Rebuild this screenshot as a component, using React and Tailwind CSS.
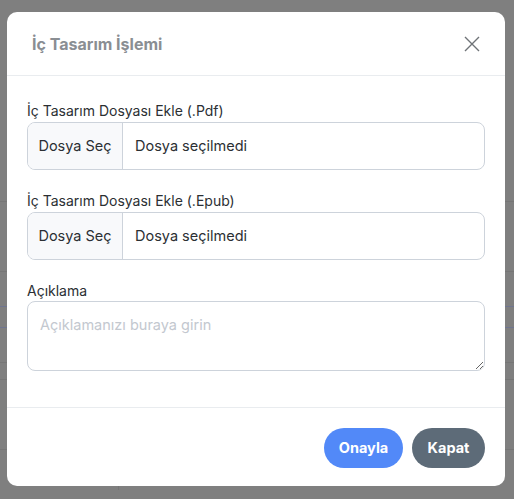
import { useState } from 'react';

const FileField = ({ label }) => (
  <div>
    <div className="text-[14px] leading-[20px] text-[#2b2f33] mb-px">{label}</div>
    <div className="flex h-[48px] rounded-[8px] border border-[#cdd3db] overflow-hidden text-[14.5px] text-[#2b2f33]">
      <div className="w-[95px] shrink-0 flex items-center justify-center bg-[#f8f9fb] border-r border-[#cdd3db]">
        Dosya Seç
      </div>
      <div className="flex items-center pl-[12px]">Dosya seçilmedi</div>
    </div>
  </div>
);

export default function App() {
  const [note, setNote] = useState('');

  return (
    <div
      className="relative w-[514px] h-[499px] overflow-hidden bg-[#7f7f7f]"
      style={{ fontFamily: 'Inter, "Noto Sans", sans-serif' }}
    >
      {/* dimmed page behind the modal */}
      <div className="flex flex-col">
        <div className="h-[202px] border-b border-[#767676]" />
        <div className="h-[70px] border-b border-[#767676]" />
        <div className="h-[35px] border-b border-[#6f7590]" />
        <div className="h-[21px] border-b border-[#6f7590]" />
        <div className="h-[35px] border-b border-[#767676]" />
        <div className="h-[17px] border-b border-[#767676]" />
        <div className="h-[70px] border-b border-[#767676]" />
        <div className="flex h-[40px]">
          <div className="w-[119px] border-r border-[#767676]" />
        </div>
      </div>

      <div className="absolute left-[7px] top-[12px] w-[498px] h-[474px] bg-white rounded-[10px] flex flex-col">
        <div className="h-[64px] shrink-0 flex items-center justify-between pl-[25px] pr-[24px] border-b border-[#e9ecef]">
          <h5 className="text-[16px] font-bold text-[#8a8e93]">İç Tasarım İşlemi</h5>
          <button className="w-[18px] h-[18px] flex items-center justify-center text-[#6f7377]">
            <svg width="16" height="16" viewBox="0 0 16 16" fill="none" stroke="currentColor" strokeWidth="1.4">
              <path d="M1 1 L15 15 M15 1 L1 15" />
            </svg>
          </button>
        </div>

        <div className="flex-1 px-[20px] pt-[25px] flex flex-col gap-[21px]">
          <FileField label="İç Tasarım Dosyası Ekle (.Pdf)" />
          <FileField label="İç Tasarım Dosyası Ekle (.Epub)" />
          <div>
            <div className="text-[14px] leading-[20px] text-[#2b2f33]">Açıklama</div>
            <textarea
              value={note}
              onChange={(e) => setNote(e.target.value)}
              placeholder="Açıklamanızı buraya girin"
              className="block w-full h-[70px] rounded-[8px] border border-[#cdd3db] px-[12px] py-[12px] text-[14.5px] text-[#2b2f33] placeholder:text-[#c3c8cf] outline-none"
            />
          </div>
        </div>

        <div className="h-[79px] shrink-0 border-t border-[#e9ecef] flex items-center justify-end gap-[9px] pr-[20px] pt-[2px]">
          <button className="h-[40px] w-[79px] rounded-full bg-[#5289f8] text-white text-[14.5px] font-bold">
            Onayla
          </button>
          <button className="h-[40px] w-[73px] rounded-full bg-[#5d6b78] text-white text-[14.5px] font-bold">
            Kapat
          </button>
        </div>
      </div>
    </div>
  );
}
